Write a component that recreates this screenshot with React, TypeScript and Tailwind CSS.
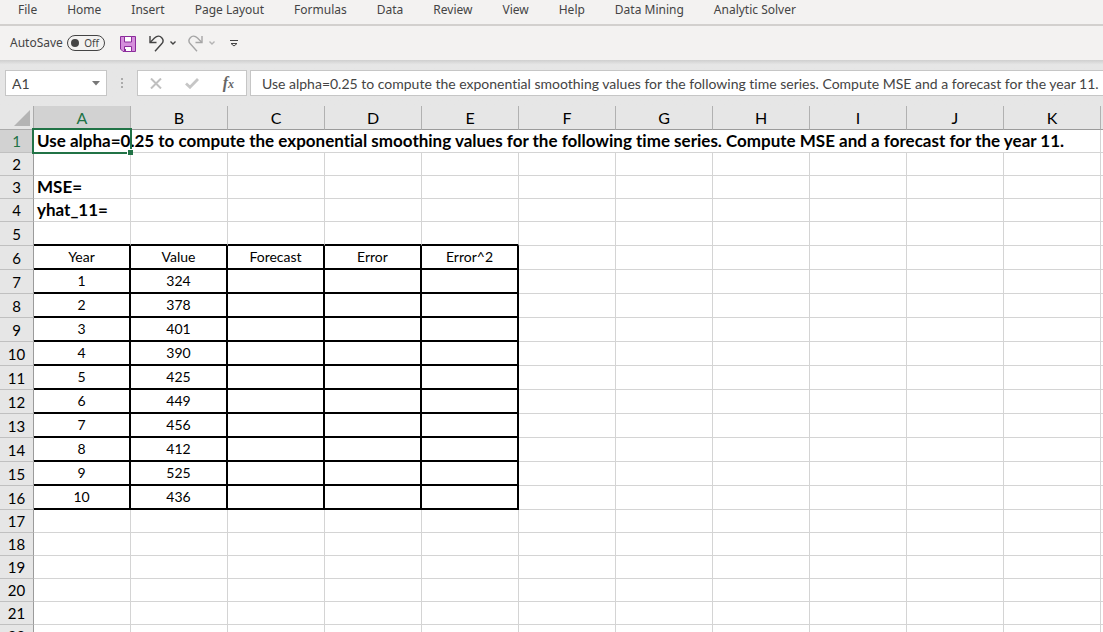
import { useState } from 'react';

const menuItems = [
  'File',
  'Home',
  'Insert',
  'Page Layout',
  'Formulas',
  'Data',
  'Review',
  'View',
  'Help',
  'Data Mining',
  'Analytic Solver',
];

const columns = ['A', 'B', 'C', 'D', 'E', 'F', 'G', 'H', 'I', 'J', 'K'];

const title =
  'Use alpha=0.25 to compute the exponential smoothing values for the following time series. Compute MSE and a forecast for the year 11.';

const values = [324, 378, 401, 390, 425, 449, 456, 412, 525, 436];

const FIRST_TABLE_ROW = 6;
const LAST_TABLE_ROW = 16;

// cell contents by row number
const cells: Record<number, string[]> = {
  1: [title],
  3: ['MSE='],
  4: ['yhat_11='],
  6: ['Year', 'Value', 'Forecast', 'Error', 'Error^2'],
};
values.forEach((value, i) => {
  cells[i + 7] = [String(i + 1), String(value)];
});

const MenuBar = () => (
  <nav className="flex h-6 items-start gap-[30px] overflow-hidden pl-[18px] text-[12px] leading-5 text-[#444444]">
    {menuItems.map((item) => (
      <button key={item} type="button" className="whitespace-nowrap">
        {item}
      </button>
    ))}
  </nav>
);

const SmallChevron = ({ color }: { color: string }) => (
  <svg width="6" height="4" viewBox="0 0 6 4" fill="none" stroke={color} strokeWidth="1.4">
    <path d="M.5.5L3 3 5.5.5" />
  </svg>
);

const QuickAccess = () => {
  const [autoSave, setAutoSave] = useState(false);

  return (
    <div className="flex h-9 items-center border-t-2 border-[#d2d0ce] pl-[10px] text-[12px] text-[#444444]">
      <span className="mr-1">AutoSave</span>
      <button
        type="button"
        role="switch"
        aria-checked={autoSave}
        aria-label="AutoSave"
        onClick={() => setAutoSave(!autoSave)}
        className="flex h-4 w-[38px] items-center justify-between rounded-full border border-[#444444] pr-[5px] pl-[3px] text-[10px] leading-none"
      >
        <span className="size-2 rounded-full bg-[#444444]" />
        {autoSave ? 'On' : 'Off'}
      </button>
      <button type="button" aria-label="Save" className="mt-[2px] ml-[15px]">
        <svg width="16" height="16" viewBox="0 0 16 16">
          <path d="M.5.5h15v15H3L.5 13z" fill="#d58fdc" stroke="#8b2c9b" />
          <path d="M4.5.5h7v5.5h-7z" fill="#fff" stroke="#8b2c9b" />
          <path d="M4.5 10.5h7v5h-7z" fill="#fff" stroke="#8b2c9b" />
          <path d="M5.5 13v2" stroke="#8b2c9b" />
        </svg>
      </button>
      <button type="button" aria-label="Undo" className="ml-[13px] flex items-center gap-[6px]">
        <svg width="15" height="17" viewBox="0 0 15 17" fill="none" stroke="#444444" strokeWidth="1.4">
          <path d="M1 1v6.5h6.5" />
          <path d="M1.3 7.2L5.5 3C8 .8 11 .8 12.7 2.7c1.800 2 1.600 4.600-.2 6.400L6 16.200" />
        </svg>
        <SmallChevron color="#444444" />
      </button>
      <button type="button" aria-label="Redo" className="ml-3 flex items-center gap-[6px]">
        <svg width="15" height="17" viewBox="0 0 15 17" fill="none" stroke="#a6a6a6" strokeWidth="1.4">
          <path d="M14 1v6.5H7.5" />
          <path d="M13.7 7.2L9.5 3C7 .8 4 .8 2.3 2.7c-1.8 2-1.6 4.6.2 6.4L9 16.2" />
        </svg>
        <SmallChevron color="#b4b4b4" />
      </button>
      <button type="button" aria-label="Customize Quick Access Toolbar" className="ml-[15px]">
        <svg width="8" height="7" viewBox="0 0 8 7" fill="none" stroke="#444444">
          <path d="M0 .5h8M1 3.5h6L4 6z" />
        </svg>
      </button>
    </div>
  );
};

const FormulaBar = () => (
  <div className="flex h-[46px] items-start bg-linear-to-b from-[#cfcfcf] to-[#e6e6e6] to-10% pt-[10px] pl-[5px]">
    <div className="flex h-[26px] w-[102px] items-center border border-[#c6c6c6] bg-white pr-[6px] pl-[6px]">
      <input
        aria-label="Name Box"
        defaultValue="A1"
        className="w-full min-w-0 font-[Lato,sans-serif] text-[14px] text-[#444444] outline-none"
      />
      <svg width="8" height="5" viewBox="0 0 8 5" className="shrink-0">
        <path d="M0 0h8L4 4.5z" fill="#777" />
      </svg>
    </div>
    <div className="flex h-[26px] w-[30px] flex-col items-center justify-center gap-[2px]">
      <span className="size-[2px] bg-[#ababab]" />
      <span className="size-[2px] bg-[#ababab]" />
      <span className="size-[2px] bg-[#ababab]" />
    </div>
    <div className="flex h-[26px] w-[110px] items-center justify-between border border-[#c6c6c6] bg-white pr-[12px] pl-[12px]">
      <button type="button" aria-label="Cancel">
        <svg width="12" height="11" viewBox="0 0 12 11" stroke="#c0c0c0" strokeWidth="2">
          <path d="M1 .5l10 10M11 .5l-10 10" />
        </svg>
      </button>
      <button type="button" aria-label="Enter">
        <svg width="14" height="11" viewBox="0 0 14 11" fill="none" stroke="#c6c6c6" strokeWidth="2.8">
          <path d="M1 5.5l4 3.700L13 1" />
        </svg>
      </button>
      <button
        type="button"
        aria-label="Insert Function"
        className="font-['Liberation_Serif',serif] text-[16px] leading-none font-bold text-[#666666] italic"
      >
        f<span className="text-[12px]">x</span>
      </button>
    </div>
    <input
      aria-label="Formula Bar"
      defaultValue={title}
      className="ml-[3px] h-[26px] min-w-0 flex-1 border border-r-0 border-[#c6c6c6] bg-white pl-[11px] font-[Lato,sans-serif] text-[14px] text-[#444444] outline-none"
    />
  </div>
);

const rowHeight = (row: number) => {
  if (row >= FIRST_TABLE_ROW - 1 && row <= LAST_TABLE_ROW) return 'h-6';
  return 'h-[23px]';
};

const cellStyle = (row: number, col: number) => {
  if (col > 4 || row < FIRST_TABLE_ROW - 1 || row > LAST_TABLE_ROW) {
    return 'border-r border-b border-[#d4d4d4] pl-[3px] text-left text-[17px] font-bold';
  }
  if (row === FIRST_TABLE_ROW - 1) {
    return 'border-r border-b-2 border-r-[#d4d4d4] border-b-black';
  }
  return 'border-r-2 border-b-2 border-black text-center text-[14px]';
};

const Sheet = () => (
  <table className="w-full table-fixed border-separate border-spacing-0 font-[Lato,sans-serif] leading-5 text-black">
    <colgroup>
      <col className="w-[34px]" />
      {columns.map((name) => (
        <col key={name} className="w-[97px]" />
      ))}
      <col />
    </colgroup>
    <thead>
      <tr className="h-6 bg-[#e6e6e6] text-[16px]">
        <th aria-label="Select all" className="border-r border-b border-[#ababab] p-0">
          <svg width="16" height="16" viewBox="0 0 16 16" className="ml-[14px]">
            <path d="M16 0v16H0z" fill="#b4b4b4" />
          </svg>
        </th>
        {columns.map((name) => (
          <th
            key={name}
            scope="col"
            className={`border-r border-b border-r-[#b1b1b1] border-b-[#9b9b9b] p-0 font-normal ${
              name === 'A' ? 'bg-[#d2d2d2] text-[#217346]' : ''
            }`}
          >
            {name}
          </th>
        ))}
        <th className="border-b border-[#9b9b9b] p-0" />
      </tr>
    </thead>
    <tbody>
      {Array.from({ length: 22 }, (_, i) => i + 1).map((row) => (
        <tr key={row} className={rowHeight(row)}>
          <th
            scope="row"
            className={`border-r border-b border-r-[#9b9b9b] border-b-[#c0c0c0] p-0 text-[15px] font-normal ${
              row === 1 ? 'bg-[#d2d2d2] text-[#217346]' : 'bg-[#e6e6e6]'
            }`}
          >
            {row}
          </th>
          {row === 1 ? (
            <td
              colSpan={columns.length}
              className="relative border-r border-b border-[#d4d4d4] p-0 pl-[3px] text-[17px] font-bold whitespace-nowrap"
            >
              {title}
              <div className="absolute -top-[2px] -left-[2px] h-[26px] w-[100px] border-2 border-[#217346]">
                <span className="absolute -right-[3px] -bottom-[3px] size-[6px] border-t border-l border-white bg-[#217346]" />
              </div>
            </td>
          ) : (
            columns.map((name, col) => (
              <td key={name} className={`p-0 whitespace-nowrap ${cellStyle(row, col)}`}>
                {cells[row]?.[col]}
              </td>
            ))
          )}
          <td className="border-b border-[#d4d4d4] p-0" />
        </tr>
      ))}
    </tbody>
  </table>
);

const App = () => (
  <div className="h-screen overflow-hidden bg-white font-['Noto_Sans',sans-serif] [font-variant-ligatures:none]">
    <header className="bg-[#f3f2f1]">
      <MenuBar />
      <QuickAccess />
      <FormulaBar />
    </header>
    <Sheet />
  </div>
);

export default App;
